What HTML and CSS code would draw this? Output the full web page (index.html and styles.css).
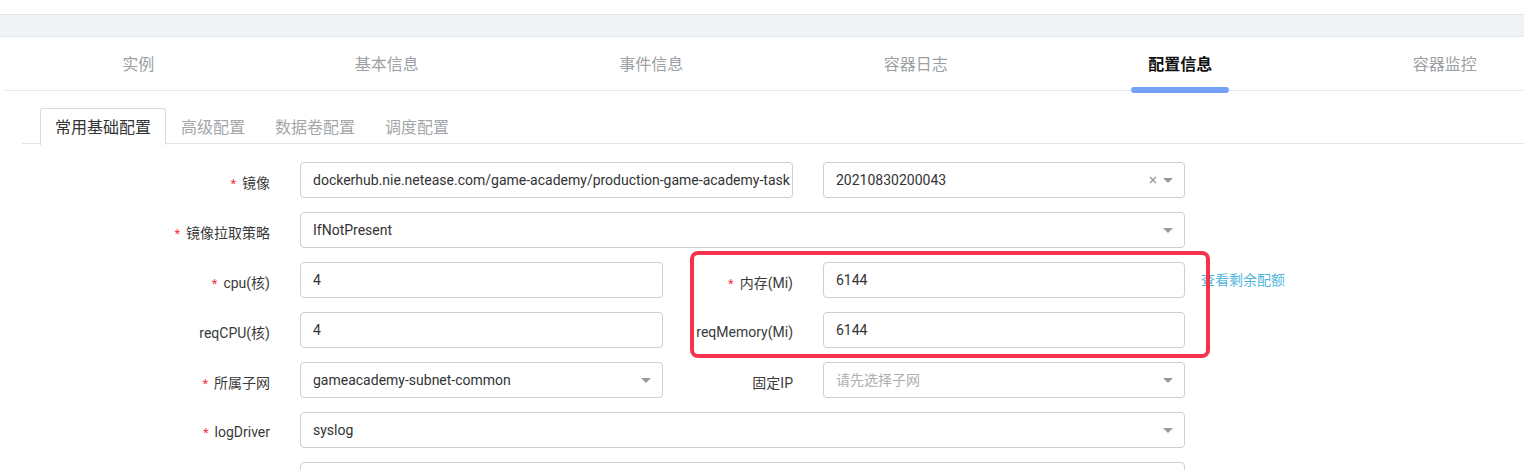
FILE: index.html
```html
<!DOCTYPE html>
<html lang="zh-CN">
<head>
<meta charset="utf-8">
<title>配置信息</title>
<link rel="stylesheet" href="styles.css">
</head>
<body>
<div class="page">
  <div class="topband"></div>
  <nav class="tabs">
    <div class="tab">实例</div>
    <div class="tab">基本信息</div>
    <div class="tab">事件信息</div>
    <div class="tab">容器日志</div>
    <div class="tab tab-active">配置信息<span class="tab-ink"></span></div>
    <div class="tab">容器监控</div>
  </nav>

  <div class="subtabs">
    <div class="subtab subtab-active">常用基础配置</div>
    <div class="subtab">高级配置</div>
    <div class="subtab">数据卷配置</div>
    <div class="subtab">调度配置</div>
  </div>

  <div class="form">
    <div class="row">
      <div class="label"><span class="req">*</span>镜像</div>
      <div class="control w-image">dockerhub.nie.netease.com/game-academy/production-game-academy-task</div>
      <div class="control select w-half tag-select">20210830200043<svg class="clear" width="8" height="8" viewBox="0 0 8 8"><path d="M1 1L7 7M7 1L1 7" stroke="#999" stroke-width="1.4" fill="none"/></svg><span class="caret"></span></div>
    </div>

    <div class="row">
      <div class="label"><span class="req">*</span>镜像拉取策略</div>
      <div class="control select w-full">IfNotPresent<span class="caret"></span></div>
    </div>

    <div class="row">
      <div class="label"><span class="req">*</span>cpu(核)</div>
      <div class="control w-left">4</div>
      <div class="label"><span class="req">*</span>内存(Mi)</div>
      <div class="control w-half">6144</div>
      <a class="quota">查看剩余配额</a>
    </div>

    <div class="row">
      <div class="label">reqCPU(核)</div>
      <div class="control w-left">4</div>
      <div class="label">reqMemory(Mi)</div>
      <div class="control w-half">6144</div>
    </div>

    <div class="row">
      <div class="label"><span class="req">*</span>所属子网</div>
      <div class="control select w-left">gameacademy-subnet-common<span class="caret"></span></div>
      <div class="label">固定IP</div>
      <div class="control select w-half placeholder">请先选择子网<span class="caret"></span></div>
    </div>

    <div class="row">
      <div class="label"><span class="req">*</span>logDriver</div>
      <div class="control select w-full">syslog<span class="caret"></span></div>
    </div>

    <div class="row">
      <div class="label"></div>
      <div class="control w-full"></div>
    </div>
  </div>

  <div class="annotation"></div>
</div>
</body>
</html>
```

FILE: styles.css
```css
html, body {
  margin: 0;
  padding: 0;
  background: #fff;
}
body {
  font-family: Roboto, "Noto Sans CJK SC", sans-serif;
  font-size: 14px;
  color: #333;
  overflow: hidden;
}
.page {
  position: relative;
  width: 1524px;
  height: 470px;
  overflow: hidden;
}
.topband {
  margin-top: 14px;
  height: 21px;
  background: #f0f3f6;
  border-top: 1px solid #e3e7eb;
  border-bottom: 1px solid #e3e7eb;
}
.tabs {
  display: flex;
  margin-left: 4px;
  padding-left: 18px;
  width: 1555px;
  border-bottom: 1px solid #e8e8e8;
}
.tab {
  flex: 1 1 auto;
  position: relative;
  height: 53px;
  line-height: 53px;
  text-align: center;
  font-size: 16px;
  color: #9c9fa3;
  font-family: "Noto Sans CJK SC", sans-serif;
}
.tab-active {
  color: #111;
  font-weight: 600;
}
.tab-ink {
  position: absolute;
  left: 50%;
  bottom: -3px;
  width: 98px;
  height: 6px;
  margin-left: -49px;
  border-radius: 3px;
  background: #76a1fb;
}
.subtabs {
  display: flex;
  margin: 17px 0 0 22px;
  padding-left: 18px;
  height: 35px;
  border-bottom: 1px solid #e4e4e4;
  font-family: "Noto Sans CJK SC", sans-serif;
}
.subtab {
  height: 35px;
  line-height: 34px;
  padding: 0 14px;
  border: 1px solid transparent;
  border-bottom: none;
  font-size: 16px;
  color: #a3a6a9;
}
.subtab-active {
  height: 36px;
  color: #333;
  background: #fff;
  border-color: #dcdcdc;
  border-radius: 3px 3px 0 0;
}
.form {
  margin: 18px 0 0 140px;
}
.row {
  display: flex;
  align-items: center;
  height: 36px;
  margin-bottom: 14px;
}
.label {
  width: 160px;
  flex: none;
  box-sizing: border-box;
  padding-right: 30px;
  text-align: right;
  color: #3a3a3a;
  padding-top: 4px;
}
.req {
  color: #f5333f;
  margin-right: 6px;
  font-size: 13px;
}
.control {
  position: relative;
  flex: none;
  box-sizing: border-box;
  height: 36px;
  line-height: 34px;
  padding: 0 12px;
  border: 1px solid #cfcfcf;
  border-radius: 4px;
  background: #fff;
  color: #333;
  white-space: nowrap;
  overflow: hidden;
}
.w-image { width: 493px; }
.tag-select { margin-left: 30px; }
.w-half { width: 362px; }
.w-left { width: 363px; }
.w-full { width: 885px; }
.placeholder { color: #aeaeae; }
.caret {
  position: absolute;
  right: 11px;
  top: 15px;
  width: 0;
  height: 0;
  border-left: 5px solid transparent;
  border-right: 5px solid transparent;
  border-top: 5px solid #9a9a9a;
}
.clear {
  position: absolute;
  right: 27px;
  top: 13px;
}
.quota {
  margin-left: 16px;
  color: #52b6dc;
  font-family: "Noto Sans CJK SC", sans-serif;
  margin-top: -2px;
}
.annotation {
  position: absolute;
  left: 690px;
  top: 251px;
  width: 520px;
  height: 107px;
  box-sizing: border-box;
  border: 4px solid #f5334a;
  border-radius: 8px;
}
```
